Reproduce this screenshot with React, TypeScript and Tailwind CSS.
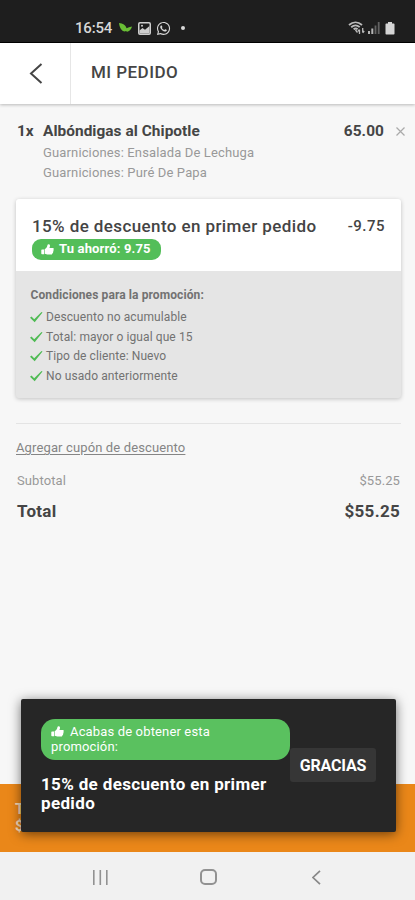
import React from "react";
import { FaWhatsapp } from "react-icons/fa";

const conditions = [
  "Descuento no acumulable",
  "Total: mayor o igual que 15",
  "Tipo de cliente: Nuevo",
  "No usado anteriormente",
];

function ThumbsUp({ className = "" }: { className?: string }) {
  return (
    <svg className={`shrink-0 ${className}`} width="13" height="11" viewBox="0 0 13 11" fill="currentColor">
      <path d="M.3 6.1Q.3 5.4 1 5.4H3.1V10.3H1Q.3 10.3.3 9.6Z" />
      <path d="M3.7 5.1C5.4 4.2 6.1 3.2 6.4 1.2 6.6-.1 8.8-.1 9 1.6 9.1 2.6 8.7 3.2 8.4 4H11.6C13 4.1 13.1 5.5 12.3 6 12.9 6.6 12.7 7.5 12 7.8 12.4 8.5 12 9.2 11.3 9.4 11.3 10.2 10.7 10.6 9.7 10.6H7.3C5.9 10.6 5.1 9.9 3.7 9.8Z" />
    </svg>
  );
}

function StatusBar() {
  return (
    <header className="flex h-[43px] shrink-0 items-start justify-between border-b border-black bg-[#1e1e1e] pt-[20px] pr-[20.5px] pl-[75px] text-[#d8d8d8]">
      <div className="flex h-4 items-center">
        <span className="w-[37px] text-[15px] leading-4 font-medium tracking-[-0.2px]">16:54</span>
        <svg className="ml-[7px]" width="13" height="10" viewBox="0 0 13 10" fill="#69bd35">
          <path d="M0 0C4 .3 6.5 2 7.6 5.2L10 4.3 13 3.5C12.3 5.8 11 8 8.2 8.7L6.8 8 6 8.4C2.2 8.2.6 4.5 0 0Z" />
        </svg>
        <svg className="ml-[6px]" width="13" height="13" viewBox="0 0 13 13" fill="none">
          <rect x=".75" y=".75" width="11.5" height="11.5" rx="1.2" stroke="#cecece" strokeWidth="1.5" />
          <path d="M1.5 8.5 4.5 6 7 7.8 11.5 4V11.5H1.5Z" fill="#cecece" />
          <circle cx="4" cy="3.8" r="1" fill="#cecece" />
        </svg>
        <FaWhatsapp className="ml-[5px]" size={15} />
        <span className="ml-[10px] size-[4px] rounded-full bg-[#d8d8d8]" />
      </div>
      <div className="flex h-4 items-center">
        <svg width="17" height="14" viewBox="0 0 17 14" fill="none" stroke="#bdbdbd">
          <path d="M1 4C5 .4 10 .4 14 4M3.2 6.2C6 3.8 9 3.8 11.7 6.2M5.6 8.3C7 7.2 8.3 7.2 9.6 8.3" strokeWidth="1.8" />
          <path d="m7.5 9 2 2.5M11.5 13V8.7M10 10.2l1.5-1.7M14.7 7v4.5m1.5-1.5-1.5 1.7" strokeWidth="1.3" />
        </svg>
        <svg className="ml-[3px]" width="12" height="12" viewBox="0 0 12 12">
          <path d="M0 9h2v3H0zM3.3 6.5h2V12h-2z" fill="#b5b5b5" />
          <path d="M6.6 3.5h1.8V12H6.6zM9.8 0h1.8v12H9.8z" fill="#626262" />
        </svg>
        <svg className="ml-[5px]" width="10" height="13" viewBox="0 0 10 13" fill="#d5d5d5">
          <path d="M3 0h4v1.5h1.7q.8 0 .8.8v9.4q0 .8-.8.8H1.3q-.8 0-.8-.8V2.3q0-.8.8-.8H3z" />
        </svg>
      </div>
    </header>
  );
}

function TitleBar() {
  return (
    <div className="flex h-[61px] shrink-0 items-stretch bg-white shadow-[0_1px_3px_rgba(0,0,0,0.25)]">
      <button className="flex w-[71px] items-center border-r border-[#e6e6e6] pl-[29px]" aria-label="Volver">
        <svg width="14" height="21" viewBox="0 0 14 21" fill="none" stroke="#454545" strokeWidth="2">
          <path d="M12.5 1 2 10.5 12.5 20" />
        </svg>
      </button>
      <h1 className="mb-[3px] self-center pl-[20px] text-[17px] leading-5 font-medium tracking-[0.45px] text-[#454545]">MI PEDIDO</h1>
    </div>
  );
}

function Promotion() {
  return (
    <section className="mt-[17px] h-[199px] overflow-hidden rounded-[3px] bg-[#e5e5e5] shadow-[0_1px_4px_rgba(0,0,0,0.22)]">
      <div className="h-[72px] bg-white pt-[17px] pr-[16px] pl-[16px]">
        <div className="flex h-5 items-center justify-between text-[#444]">
          <h2 className="text-[17px] leading-5 font-medium tracking-[0.4px] whitespace-nowrap">15% de descuento en primer pedido</h2>
          <span className="text-[15px] leading-5 font-medium tracking-[0.5px]">-9.75</span>
        </div>
        <div className="mt-[3px] flex h-[21px] w-[129px] items-center rounded-[9px] bg-[#53be59] pb-px pl-[9px] text-white">
          <ThumbsUp />
          <span className="ml-[5px] text-[13px] leading-4 font-bold tracking-[0.15px] whitespace-nowrap">Tu ahorró: 9.75</span>
        </div>
      </div>
      <div className="pt-[14px] pl-[14.5px] text-[#727272]">
        <h3 className="text-[12px] leading-5 font-bold tracking-[0.1px]">Condiciones para la promoción:</h3>
        <ul className="mt-[2px]">
          {conditions.map((condition) => (
            <li key={condition} className="flex h-[19.7px] items-center text-[12px] tracking-[0.1px]">
              <svg className="mr-[3px] -ml-[0.5px]" width="13" height="12" viewBox="0 0 13 12" fill="#4fbb54">
                <path d="M0 6.7 1.5 5.6 4.2 8.3 11.5 1 12.5 1.6 4.7 11.3Z" />
              </svg>
              {condition}
            </li>
          ))}
        </ul>
      </div>
    </section>
  );
}

function PromotionToast() {
  return (
    <div className="absolute top-[699px] left-[21px] flex h-[133px] w-[375px] rounded-[2px] bg-[#262626] pt-[20px] pl-[20px] text-white shadow-[0_2px_12px_rgba(0,0,0,0.55)]">
      <div className="w-[249px] shrink-0">
        <div className="h-[41px] w-[249px] rounded-[14px] bg-[#5ac15f] pt-[5px] pl-[10px] text-[13px] leading-[15px] tracking-[0.15px]">
          <div className="flex h-[15px] items-center">
            <ThumbsUp className="mr-[6px]" />
            Acabas de obtener esta
          </div>
          <div>promoción:</div>
        </div>
        <h2 className="mt-[15px] text-[17px] leading-[19px] font-bold tracking-[0.35px] whitespace-nowrap">15% de descuento en primer<br />pedido</h2>
      </div>
      <button className="mt-[29px] h-[34px] w-[86px] rounded-[3px] bg-[#363636] pt-px text-[16px] leading-5 font-bold tracking-[-0.2px]">GRACIAS</button>
    </div>
  );
}

export default function App() {
  return (
    <div className="relative flex h-[900px] w-[415px] flex-col overflow-hidden bg-[#f7f7f7] font-['Roboto',sans-serif]">
      <StatusBar />
      <TitleBar />
      <main className="flex-1 pt-[17px] pr-[14px] pl-[16px]">
        <section className="flex">
          <span className="w-[27px] pl-px text-[15.4px] leading-5 font-bold text-[#454545]">1x</span>
          <div className="flex-1">
            <h2 className="text-[15.4px] leading-5 font-bold tracking-[0.05px] text-[#454545]">Albóndigas al Chipotle</h2>
            <p className="mt-[2px] text-[13px] leading-5 tracking-[0.14px] text-[#999]">Guarniciones: Ensalada De Lechuga</p>
            <p className="text-[13px] leading-[19px] tracking-[0.14px] text-[#999]">Guarniciones: Puré De Papa</p>
          </div>
          <span className="text-[15.4px] leading-5 font-bold tracking-[0.1px] text-[#454545]">65.00</span>
          <svg className="mt-[6px] mr-[-4px] ml-[12px]" width="9" height="9" viewBox="0 0 9 9" fill="none" stroke="#aaa" strokeWidth="1.2">
            <path d="m.5.5 8 8m0-8-8 8" />
          </svg>
        </section>
        <Promotion />
        <hr className="mt-[25px] border-[#e4e4e4]" />
        <a className="mt-[14px] block w-fit text-[13px] leading-5 tracking-[0.13px] text-[#858585] underline underline-offset-2">Agregar cupón de descuento</a>
        <div className="mt-[13px] flex justify-between pr-px pl-[1px] text-[13px] leading-5 tracking-[0.1px] text-[#999]">
          <span>Subtotal</span><span>$55.25</span>
        </div>
        <div className="mt-[10px] flex justify-between pr-px pl-[1px] text-[17px] leading-5 font-bold tracking-[0.3px] text-[#454545]">
          <span>Total</span><span>$55.25</span>
        </div>
      </main>
      <div className="h-[68px] shrink-0 bg-[#ea8719] pt-[17px] pl-[15px] text-[15px] leading-[17px] font-bold text-[#f7ddb9]">
        <div>T</div><div>$</div>
      </div>
      <nav className="flex h-[48px] shrink-0 items-center bg-[#f1f1f1] pt-[2px] pl-[93px]">
        <svg width="15" height="15" viewBox="0 0 15 15" fill="#929292"><path d="M0 0h1.6v15H0zM6.5 0h1.6v15H6.5zM13 0h1.6v15H13z" /></svg>
        <span className="ml-[92px] h-[16px] w-[17px] rounded-[5px] border-2 border-[#929292]" />
        <svg className="ml-[95px]" width="9" height="15" viewBox="0 0 9 15" fill="none" stroke="#888" strokeWidth="1.7"><path d="M8 .8 1 7.5 8 14.2" /></svg>
      </nav>
      <PromotionToast />
    </div>
  );
}
